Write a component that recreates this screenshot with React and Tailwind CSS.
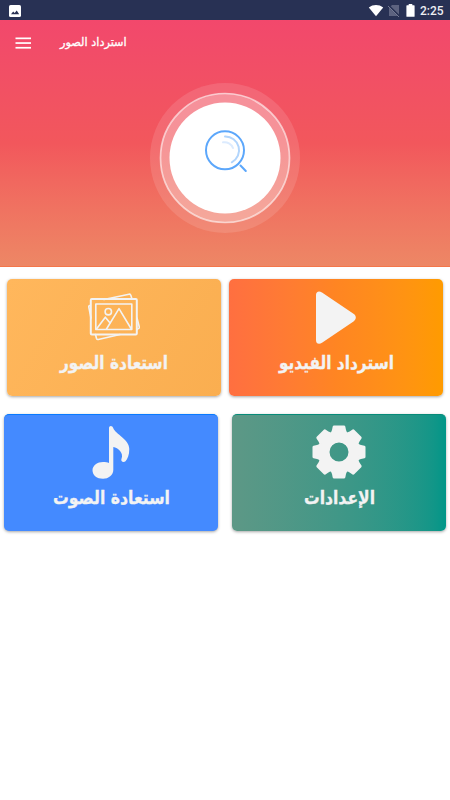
import React from 'react'

const gearTeeth = [0, 45, 90, 135, 180, 225, 270, 315]

function StatusBar() {
  return (
    <div className="flex h-5 items-center bg-[#283154] pl-[9px] pr-[7px]">
      <svg width="12" height="12" viewBox="0 0 12 12" className="mt-px">
        <rect width="12" height="12" rx="1.6" fill="#fff" />
        <path d="M2 9.2 4.2 6.4 5.7 8 7.7 5.4 10.2 9.2Z" fill="#283154" />
      </svg>
      <div className="ml-auto flex items-center">
        <svg width="16" height="13" viewBox="0 0 16 13">
          <path d="M.8 3.500C5 .2 11 .2 15.200 3.500L8 12.300Z" fill="#fff" />
        </svg>
        <svg width="12" height="13" viewBox="0 0 12 13" className="ml-[4px]">
          <path d="M4 1h7v11H1V4Z" fill="#5d6380" />
          <path d="M0 1 12 13" stroke="#283154" strokeWidth="2" />
          <path d="M0 2 11 13" stroke="#747a93" strokeWidth="1" />
        </svg>
        <svg width="9" height="13" viewBox="0 0 9 13" className="ml-[6px]">
          <path d="M2.7 0h3.6v1.2H8a.6.6 0 0 1 .6.6v10.4a.6.6 0 0 1-.6.6H1a.6.6 0 0 1-.6-.6V1.8a.6.6 0 0 1 .6-.6h1.7Z" fill="#fff" />
        </svg>
        <span className="ml-[5px] w-[23px] pt-px font-[Roboto] text-[12px] leading-5 font-medium text-[#eeeff3]">2:25</span>
      </div>
    </div>
  )
}

function SearchButton() {
  return (
    <button className="mx-auto mt-[18px] block h-[150px] w-[150px]">
      <svg width="150" height="150" viewBox="0 0 150 150" fill="none">
        <circle cx="75" cy="75" r="75" fill="#fff" fillOpacity=".12" />
        <circle cx="75" cy="75" r="64.5" fill="#fff" fillOpacity=".28" stroke="#fff" strokeOpacity=".6" strokeWidth="1.7" />
        <circle cx="75" cy="75" r="55.5" fill="#fff" />
        <g strokeLinecap="round" strokeWidth="2">
          <circle cx="75" cy="67.3" r="19" stroke="#5ca7fb" />
          <path d="m90.500 82.500 5.300 5.500" stroke="#5ca7fb" />
          <path d="M75 53.500A13.700 13.700 0 0 1 81.800 79.300" stroke="#b2d5fc" />
          <path d="M73 59.300A9 9 0 0 1 83 65" stroke="#dcebfe" />
        </g>
      </svg>
    </button>
  )
}

function PhotosIcon() {
  return (
    <svg width="54" height="54" viewBox="0 0 54 54" fill="none" stroke="#f3f3f3" strokeWidth="1.6" strokeLinejoin="round" strokeLinecap="round">
      <path d="M17 9.500 42 4.200q1.400-.3 1.800 1L45 9M3 15.500q-1.500.3-1.200 1.600L4 28M50 28l2.300 9q.3 1.500-1.200 1.800L50 39.500M8.500 44.500l1 4q.4 1.200 1.800 1L33 44.500" />
      <rect x="3.800" y="9" width="46" height="35.500" rx="1" strokeWidth="2" />
      <rect x="8.800" y="14" width="36" height="25.500" />
      <circle cx="21.300" cy="21.700" r="3.200" />
      <path d="M9.500 39 18.300 27.200l5 6M19.500 39 32 18.700 44.300 39" />
    </svg>
  )
}

function PlayIcon() {
  return (
    <svg width="54" height="54" viewBox="0 0 54 54" fill="#f3f3f3">
      <path d="M7 5C7 1.500 10 .3 13 2.500L44.500 23.800C47.600 26 47.600 29.200 44.500 31.400L13 52.700C10 54.900 7 53.700 7 50.200Z" />
    </svg>
  )
}

function NoteIcon() {
  return (
    <svg width="54" height="54" viewBox="0 0 54 54" fill="#f3f3f3">
      <path d="M25 38V3C25 .3 28.500.3 29.200 3C31.500 9.500 45.300 14 45.300 24C45.300 30 43.500 34 41.500 36.300C39.500 38 36.300 36.500 37.500 33.800C40 28 34 22.500 29.300 22V45C29.300 50 24.500 53.800 19 53.800C13 53.800 8.500 50.300 8.500 45.300C8.500 40.500 13.500 37 19 37C21.500 37 23.500 37.300 25 38Z" />
    </svg>
  )
}

function GearIcon() {
  return (
    <svg width="54" height="54" viewBox="-27 -27 54 54" fill="#f3f3f3">
      {gearTeeth.map((angle) => (
        <path key={angle} transform={`rotate(${angle})`} d="M-10-16.500-8.400-19Q-7.300-20.800-7-22L-6.300-25.500Q-6-26.500-5-26.500H5Q6-26.500 6.300-25.500L7-22Q7.300-20.800 8.400-19L10-16.500Z" />
      ))}
      <path fillRule="evenodd" d="M0-19.500a19.500 19.500 0 1 0 0 39 19.500 19.500 0 1 0 0-39ZM0-9.500a9.500 9.500 0 1 1 0 19 9.500 9.500 0 1 1 0-19Z" />
    </svg>
  )
}

function Card({ icon, label, width, className }) {
  return (
    <button className={`flex h-[117px] w-[214px] flex-col items-center rounded-[5px] shadow-[0_1px_3px_rgba(0,0,0,0.35)] ${className}`}>
      {icon}
      <svg width={width} height="34" className="overflow-visible" role="img">
        <text
          x={width / 2}
          y="25"
          textAnchor="middle"
          direction="rtl"
          textLength={width}
          lengthAdjust="spacingAndGlyphs"
          className="fill-[#f3f3f3] stroke-[#f3f3f3] stroke-[0.3px] font-['DejaVu_Sans',sans-serif] text-[18px] font-bold"
        >
          {label}
        </text>
      </svg>
    </button>
  )
}

function App() {
  return (
    <div className="h-[800px] w-[450px] overflow-hidden bg-white">
      <StatusBar />

      <div className="h-[247px] border-b border-[#f4764a] bg-linear-to-b from-[#f2486c] via-[#f2575c] to-[#ed8765]">
        <div className="flex h-[45px] items-center pl-[15px]">
          <svg width="17" height="13" viewBox="0 0 17 13" className="mt-px" fill="#fff">
            <rect x=".5" y=".5" width="15.500" height="1.700" />
            <rect x=".5" y="5.200" width="15.500" height="1.700" />
            <rect x=".5" y="9.900" width="15.500" height="1.700" />
          </svg>
          <h1 dir="rtl" className="mt-px ml-[28px] font-['DejaVu_Sans',sans-serif] text-[11.3px] leading-5 text-white [-webkit-text-stroke:0.3px_#fff]">
            استرداد الصور
          </h1>
        </div>
        <SearchButton />
      </div>

      <div className="flex gap-2 pt-3 pl-[7px]">
        <Card icon={<PhotosIcon />} label="استعادة الصور" width={108} className="bg-linear-120 from-[#ffb75c] to-[#faae50] pt-[11px]" />
        <Card icon={<PlayIcon />} label="استرداد الفيديو" width={115} className="bg-linear-to-r from-[#ff6f40] via-[#ff8522] to-[#ff9b00] pt-[11px]" />
      </div>
      <div className="flex gap-[14px] pt-[18px] pl-1">
        <Card icon={<NoteIcon />} label="استعادة الصوت" width={117} className="border-t border-[#087aff] bg-[#448aff] pt-[10px]" />
        <Card icon={<GearIcon />} label="الإعدادات" width={71} className="border-t border-[#078b79] bg-linear-to-r from-[#5d9886] to-[#009688] pt-[10px]" />
      </div>
    </div>
  )
}

export default App
